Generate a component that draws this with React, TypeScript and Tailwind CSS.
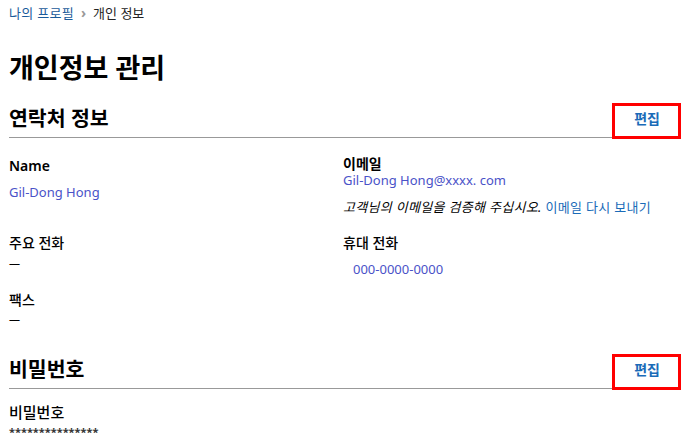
import React from "react";

const font = { fontFamily: "'Noto Sans', 'Noto Sans CJK KR', sans-serif" };

function SectionHeader({ title, top }: { title: string; top: string }) {
  return (
    <div className={`relative ${top} flex h-[38px] w-[651px] items-center justify-between border-b border-[#999]`}>
      <h2 className="text-[20.5px] font-semibold leading-none text-black">{title}</h2>
      <button className="text-[14px] font-semibold leading-none text-[#1a6bb8]">편집</button>
      <div className="pointer-events-none absolute left-[603px] top-[3px] h-[36px] w-[69px] border-[3px] border-[#ff0000]" />
    </div>
  );
}

export default function App() {
  return (
    <div className="relative h-[442px] w-[690px] overflow-hidden bg-white pl-[9px] text-[#111]" style={font}>
      <nav className="flex h-[26px] items-center gap-[7px] text-[13px] leading-none">
        <a className="tracking-[0.3px] text-[#1a5a9a]">나의 프로필</a>
        <span className="text-[14px] font-bold text-[#999]">›</span>
        <span className="text-[#222]">개인 정보</span>
      </nav>

      <h1 className="mt-[24px] flex h-[34px] items-center text-[27px] font-bold leading-none text-black">개인정보 관리</h1>

      <SectionHeader title="연락처 정보" top="mt-[16px]" />

      <div className="grid grid-cols-[334px_1fr]">
        <div className="flex flex-col">
          <div className="mt-[17px] flex h-[20px] items-center text-[14px] font-semibold text-black">Name</div>
          <div className="mt-[8px] flex h-[20px] items-center text-[13px] text-[#4a52c8]">Gil-Dong Hong</div>
          <div className="mt-[29px] flex h-[20px] items-center text-[14px] font-medium text-black">주요 전화</div>
          <div className="mt-[1px] flex h-[20px] items-center text-[11px] text-black">—</div>
          <div className="mt-[16px] flex h-[20px] items-center text-[14px] font-medium text-black">팩스</div>
          <div className="flex h-[20px] items-center text-[11px] text-black">—</div>
        </div>
        <div className="flex flex-col">
          <div className="mt-[15px] flex h-[20px] items-center text-[14px] font-semibold text-black">이메일</div>
          <div className="-mt-[2px] flex h-[20px] items-center text-[13px] text-[#4a52c8]">Gil-Dong Hong@xxxx. com</div>
          <div className="mt-[7px] flex h-[20px] items-center gap-[4px] text-[13px]">
            <span className="italic tracking-[0.3px] text-black">고객님의 이메일을 검증해 주십시오.</span>
            <a className="tracking-[0.3px] text-[#1a6bb8]">이메일 다시 보내기</a>
          </div>
          <div className="mt-[14px] flex h-[20px] items-center text-[14px] font-medium text-black">휴대 전화</div>
          <div className="mt-[8px] flex h-[20px] items-center pl-[10px] text-[13px] text-[#4a52c8]">000-0000-0000</div>
        </div>
      </div>

      <SectionHeader title="비밀번호" top="mt-[22px]" />

      <div className="mt-[13px] flex h-[20px] items-center text-[15px] font-medium text-black">비밀번호</div>
      <div className="flex h-[18px] items-center text-[11px] font-bold leading-none text-[#333]">***************</div>
    </div>
  );
}
